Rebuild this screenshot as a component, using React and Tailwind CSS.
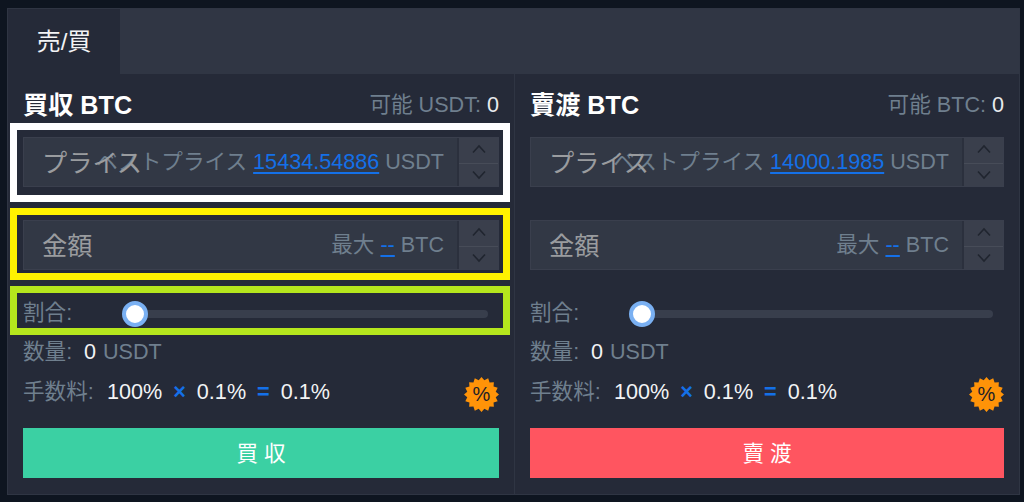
const F = "font-['Liberation_Sans','Noto_Sans_CJK_JP',sans-serif]";

function Chevron({ up }) {
  return (
    <svg width="16" height="10" viewBox="0 0 16 10" fill="none" stroke="#20252f" strokeWidth="1.6">
      <polyline points={up ? "2,8.5 8,2 14,8.5" : "2,1.5 8,8 14,1.5"} />
    </svg>
  );
}

function Field({ placeholder, label, value, unit, className = "" }) {
  return (
    <div className={`flex h-[50px] border border-[#3a3f4d] bg-[#323845] ${className}`}>
      <div className="relative flex flex-1 items-center justify-end pr-[13px] text-[21.6px] text-[#6f7f8e]">
        <span className="absolute left-[18px] top-[9px] text-[25.2px] leading-[32px] text-[#9a9c9f]">{placeholder}</span>
        <span className="whitespace-nowrap">
          {label} <span className="text-[#1470e8] underline underline-offset-[3px]">{value}</span> {unit}
        </span>
      </div>
      <div className="flex w-[41px] flex-col border-l-2 border-[#2b303d] bg-[#3a3f4c]">
        <div className="flex flex-1 items-center justify-center border-b border-[#474c58] pb-[2px]"><Chevron up /></div>
        <div className="flex flex-1 items-center justify-center"><Chevron /></div>
      </div>
    </div>
  );
}

function Badge() {
  const pts = [];
  for (let i = 0; i < 32; i++) {
    const r = i % 2 === 0 ? 17.5 : 14.5;
    const a = (i * Math.PI) / 16 - Math.PI / 2;
    pts.push(`${(17.5 + r * Math.cos(a)).toFixed(2)},${(17.5 + r * Math.sin(a)).toFixed(2)}`);
  }
  return (
    <div className="relative ml-auto mt-[3px] h-[35px] w-[35px]">
      <svg width="35" height="35" viewBox="0 0 35 35"><polygon points={pts.join(" ")} fill="#ff9308" /></svg>
      <span className="absolute inset-0 flex items-center justify-center text-[20px] text-[#1c2029]">%</span>
    </div>
  );
}

function Column({ title, avail, price, btn, btnClass, className = "" }) {
  return (
    <div className={`flex flex-col px-[15px] ${className}`}>
      <div className="flex h-[63px] items-center justify-between">
        <span className="text-[25.2px] font-bold text-white">{title}</span>
        <span className="text-[21.6px] text-[#6f7f8e]">可能 {avail}: <span className="text-[#e8eaed]">0</span></span>
      </div>
      <Field placeholder="プライス" label="ベストプライス" value={price} unit="USDT" className="mb-[33px]" />
      <Field placeholder="金額" label="最大" value="--" unit="BTC" className="mb-[23px]" />
      <div className="flex h-[40px] items-center pt-[1px] text-[21.6px] text-[#6f7f8e]">
        <span className="w-[112px]">割合:</span>
        <div className="relative mr-[11px] h-2 flex-1 rounded-full bg-[#383e4c]">
          <div className="absolute left-[-13px] top-[-9px] h-[26px] w-[26px] rounded-full border-4 border-[#7ab0f2] bg-white" />
        </div>
      </div>
      <div className="flex h-[38px] items-center pt-[1px] text-[21.6px] text-[#6f7f8e]">
        <span className="w-[61px]">数量:</span>
        <span className="text-[#f2f3f5]">0</span>
        <span className="ml-[7px]">USDT</span>
      </div>
      <div className="flex h-[42px] items-center pt-[1px] text-[21.6px] text-[#f2f3f5]">
        <span className="w-[84px] text-[#6f7f8e]">手数料:</span>
        <span>100%</span>
        <span className="mx-[11px] font-bold text-[#1470e8]">×</span>
        <span>0.1%</span>
        <span className="mx-[11px] font-bold text-[#1470e8]">=</span>
        <span>0.1%</span>
        <Badge />
      </div>
      <button className={`mt-[15px] h-[50px] pt-[2px] text-[21.6px] text-white ${btnClass}`}>{btn}</button>
    </div>
  );
}

export default function App() {
  return (
    <div className={`relative h-[502px] w-[1024px] overflow-hidden bg-[#0e1520] pb-[7px] pl-[7px] pr-[4px] pt-[8px] ${F}`}>
      <div className="flex h-full flex-col border border-[#2f3543] bg-[#252a38]">
        <div className="flex h-[65px] bg-[#303644]">
          <div className="flex w-[112px] items-center justify-center bg-[#252a38] text-[24px] text-[#f2f3f5]">売/買</div>
        </div>
        <div className="flex flex-1">
          <Column
            className="w-[507px] border-r border-[#2f3543]"
            title="買収 BTC"
            avail="USDT"
            price="15434.54886"
            btn="買 収"
            btnClass="bg-[#3bd0a3]"
          />
          <Column
            className="flex-1"
            title="賣渡 BTC"
            avail="BTC"
            price="14000.1985"
            btn="賣 渡"
            btnClass="bg-[#ff5560]"
          />
        </div>
      </div>
      <div className="absolute left-[10px] top-[123px] h-[79px] w-[500px] border-[7px] border-white" />
      <div className="absolute left-[10px] top-[208px] h-[72px] w-[500px] border-[7px] border-[#fff200]" />
      <div className="absolute left-[10px] top-[286px] h-[49px] w-[500px] border-[7px] border-[#b5e61d]" />
    </div>
  );
}
